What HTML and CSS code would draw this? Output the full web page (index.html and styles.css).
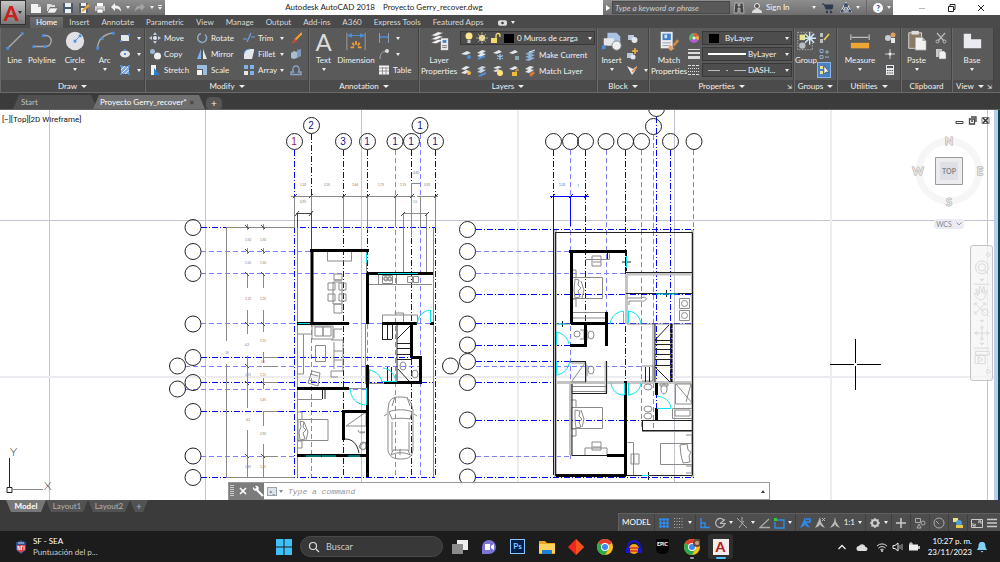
FILE: index.html
```html
<!DOCTYPE html>
<html lang="es">
<head>
    <meta charset="UTF-8">
    <meta name="viewport" content="width=device-width, initial-scale=1.0">
    <title>Autodesk AutoCAD 2018 - Proyecto Gerry_recover.dwg</title>
    <link rel="stylesheet" href="styles.css">
</head>
<body>

    <header class="header">
        <button class="app-button" aria-label="Application menu"><span class="app-letter">A</span><span class="caret"></span></button>

        <div class="titlebar">
            <div class="quick-access">
                <button aria-label="New"><svg class="ico" viewBox="0 0 12 12"><path d="M1 2h7l3 3v6H1z" fill="#f2f2f2"/><path d="M8 2v3h3z" fill="#999"/></svg></button>
                <button aria-label="Open"><svg class="ico" viewBox="0 0 12 12"><path d="M1 2h4l1 1h3v2H4l-2 4H1z" fill="#ddd"/><path d="M4 6h8l-3 5H1z" fill="#f2f2f2" stroke="#555" stroke-width=".5"/></svg></button>
                <button aria-label="Save"><svg class="ico" viewBox="0 0 12 12"><path d="M1 1h10v10H1z" fill="#44586e"/><path d="M3 1h6v4H3zM3 7h6v4H3z" fill="#eee"/></svg></button>
                <button aria-label="Save as"><svg class="ico" viewBox="0 0 12 12"><path d="M1 1h9v10H1z" fill="#53616e"/><path d="M3 1h5v3H3zM3 6h5v5H3z" fill="#eee"/><path d="M4 8l6-6 2 2-6 5-3 1z" fill="#e8a33a"/></svg></button>
                <button aria-label="Plot"><svg class="ico" viewBox="0 0 12 12"><path d="M3 1h6v3H3z" fill="#fff"/><path d="M1 4h10v5H1z" fill="#ccc"/><path d="M3 7h6v4H3z" fill="#fff" stroke="#666" stroke-width=".6"/></svg></button>
                <button class="with-caret" aria-label="Undo"><svg class="ico" viewBox="0 0 12 12"><path d="M1 5l4-4v2.500c4 0 6 2 6 6C9 7 8 6.500 5 6.500V9z" fill="#f2f2f2"/></svg><span class="caret"></span></button>
                <button class="with-caret" aria-label="Redo"><svg class="ico" viewBox="0 0 12 12"><path d="M11 5L7 1v2.500c-4 0-6 2-6 6C3 7 4 6.500 7 6.500V9z" fill="#a4a4a4"/></svg><span class="caret"></span></button>
                <button class="customize" aria-label="Customize"><span class="caret"></span></button>
            </div>
            <div class="app-title"><span>Autodesk AutoCAD 2018</span><span>Proyecto Gerry_recover.dwg</span></div>
            <div class="infocenter">
                <span class="info-arrow"></span>
                <input class="keyword" type="text" aria-label="Search help" placeholder="Type a keyword or phrase">
                <button aria-label="Search"><svg class="ico" viewBox="0 0 12 12"><path d="M2 1h3v3h2V1h3l1 10H7V6H5v5H1z" fill="#444" stroke="#ddd" stroke-width=".6"/></svg></button>
                <button class="sign-in"><svg class="ico" viewBox="0 0 12 12"><circle cx="6" cy="4" r="2.500" fill="#555" stroke="#eee"/><path d="M1 11c0-3 2-4 5-4s5 1 5 4z" fill="#ddd"/></svg>Sign In<span class="caret"></span></button>
                <button aria-label="App store"><svg class="ico" viewBox="0 0 12 12"><path d="M0 2h2l2 5h6l1-4H3" fill="#2f3a52" stroke="#2f3a52"/><circle cx="5" cy="10" r="1.200" fill="#2f3a52"/><circle cx="9" cy="10" r="1.200" fill="#2f3a52"/></svg></button>
                <button class="with-caret" aria-label="Connect"><svg class="ico" viewBox="0 0 12 12"><path d="M6 2L2 9h8z" fill="none" stroke="#f2f2f2" stroke-width="2.500"/><path d="M6 2L2 9h8z" fill="none" stroke="#3f4d6e"/><circle cx="6" cy="3" r="2" fill="#3f4d6e"/><circle cx="2" cy="9" r="1.500" fill="#3f4d6e"/><circle cx="10" cy="9" r="1.500" fill="#3f4d6e"/></svg><span class="caret"></span></button>
                <button class="with-caret help" aria-label="Help"><span class="help-mark">?</span><span class="caret"></span></button>
            </div>
            <div class="window-buttons">
                <button aria-label="Minimize"><svg class="ico" viewBox="0 0 12 12"><path d="M3 6.500h6" stroke="#bbb"/></svg></button>
                <button aria-label="Restore"><svg class="ico" viewBox="0 0 12 12"><path d="M3.500 4.500h5v5h-5zM5 4V2.500h5v5H9" fill="none" stroke="#222"/></svg></button>
                <button aria-label="Close"><svg class="ico" viewBox="0 0 12 12"><path d="M3 3l6 6M9 3L3 9" stroke="#222"/></svg></button>
            </div>
        </div>

        <nav class="ribbon-tabs">
            <a class="active" href="#">Home</a>
            <a href="#">Insert</a>
            <a href="#">Annotate</a>
            <a href="#">Parametric</a>
            <a href="#">View</a>
            <a href="#">Manage</a>
            <a href="#">Output</a>
            <a href="#">Add-ins</a>
            <a href="#">A360</a>
            <a href="#">Express Tools</a>
            <a href="#">Featured Apps</a>
            <button class="with-caret" aria-label="Ribbon display"><svg class="pill" viewBox="0 0 10 6"><rect width="10" height="6" rx="2" fill="#ddd"/><circle cx="5" cy="3" r="1.500" fill="#444"/></svg><span class="caret"></span></button>
        </nav>
    </header>

    <section class="ribbon">
        <div class="panel panel-draw">
            <div class="tools">
                <button class="big"><svg viewBox="0 0 24 24"><path d="M4 20L20 4" stroke="#aaa" stroke-width="1.500"/><path d="M2.500 18.500h3v3h-3zM18.500 2.500h3v3h-3z" fill="#4f8fd8"/></svg>Line</button>
                <button class="big"><svg viewBox="0 0 24 24"><path d="M3 18h13a6 6 0 0 0 0-12h-2" fill="none" stroke="#aaa" stroke-width="1.500"/><path d="M1.500 16.500h3v3h-3zM14 16.500h3v3h-3zM12 4.500h3v3h-3z" fill="#4f8fd8"/></svg>Polyline</button>
                <button class="big wide"><svg viewBox="0 0 24 24"><circle cx="12" cy="12" r="10" fill="#dfe1e6"/><path d="M12 12l5-5" stroke="#4f8fd8"/><path d="M10.500 10.500h3v3h-3zM16 5h3v3h-3z" fill="#4f8fd8"/></svg>Circle<span class="caret"></span></button>
                <button class="big narrow"><svg viewBox="0 0 24 24"><path d="M4 20C4 10 10 5 21 3" fill="none" stroke="#aaa" stroke-width="1.500"/><path d="M2.500 18.500h3v3h-3zM7.500 8h3v3h-3zM19.500 2h3v3h-3z" fill="#4f8fd8"/></svg>Arc<span class="caret"></span></button>
                <div class="stack">
                    <button class="small" aria-label="Rectangle"><svg class="ico" viewBox="0 0 12 12"><path d="M2 3h8v6H2z" fill="#e4e8ec"/><path d="M1 8h2v2H1zM9 2h2v2H9z" fill="#4f8fd8"/></svg><span class="caret"></span></button>
                    <button class="small" aria-label="Ellipse"><svg class="ico" viewBox="0 0 12 12"><ellipse cx="6" cy="6" rx="5" ry="3.500" fill="#e4e8ec"/><path d="M5 5h2v2H5zM5 1h2v2H5z" fill="#4f8fd8"/></svg><span class="caret"></span></button>
                    <button class="small" aria-label="Hatch"><svg class="ico" viewBox="0 0 12 12"><path d="M2 2h8v8H2z" fill="#7ba6dc"/><path d="M2 6l4-4M2 10l8-8M6 10l4-4" stroke="#dfe8f2"/><path d="M1 1h2v2H1zM9 1h2v2H9zM1 9h2v2H1zM9 9h2v2H9z" fill="#4f8fd8"/></svg><span class="caret"></span></button>
                </div>
            </div>
            <div class="panel-title">Draw<span class="caret"></span></div>
        </div>

        <div class="panel panel-modify">
            <div class="tools">
                <div class="stack col">
                    <button class="small"><svg class="ico" viewBox="0 0 12 12"><path d="M6 0l2 3H4zM6 12l2-3H4zM0 6l3-2v4zM12 6L9 4v4z" fill="#b9cbe0"/><circle cx="6" cy="6" r="2" fill="#e4e8ec"/></svg>Move</button>
                    <button class="small"><svg class="ico" viewBox="0 0 12 12"><circle cx="3.500" cy="3.500" r="2.500" fill="#9fb7d3"/><circle cx="8.500" cy="8" r="3.500" fill="#eef0f2"/></svg>Copy</button>
                    <button class="small"><svg class="ico" viewBox="0 0 12 12"><path d="M2 1h5v10H2z" fill="#eef0f2"/><path d="M5 4l6 7H5z" fill="#2e7fd0"/></svg>Stretch</button>
                </div>
                <div class="stack col">
                    <button class="small"><svg class="ico" viewBox="0 0 12 12"><path d="M9 2.500A4.500 4.500 0 1 1 5 1.600" fill="none" stroke="#8fa9c6" stroke-width="1.500"/></svg>Rotate</button>
                    <button class="small"><svg class="ico" viewBox="0 0 12 12"><path d="M5 1v10H1z" fill="#7fb2e5"/><path d="M7 1v10h4z" fill="#e4e8ec"/></svg>Mirror</button>
                    <button class="small"><svg class="ico" viewBox="0 0 12 12"><path d="M1 1h10v10H7V5H1z" fill="#9dbde0"/><path d="M1 6h5v5H1z" fill="#f2f2f2"/></svg>Scale</button>
                </div>
                <div class="stack col">
                    <button class="small"><svg class="ico" viewBox="0 0 12 12"><path d="M0 7h4M8 5h4M4 10l4-9" stroke="#6fa5e0" stroke-width="1.200"/></svg>Trim<span class="caret push"></span></button>
                    <button class="small"><svg class="ico" viewBox="0 0 12 12"><path d="M1 11V6c0-3 3-5 6-5h4v2L9 11z" fill="#e4e8ec"/><path d="M1 6c0-3 3-5 6-5" stroke="#4f8fd8" fill="none"/></svg>Fillet<span class="caret push"></span></button>
                    <button class="small"><svg class="ico" viewBox="0 0 12 12"><path d="M1 1h4v4H1zM7 1h4v4H7zM7 7h4v4H7z" fill="#7fb2e5"/><path d="M1 7h4v4H1z" fill="#e4e8ec"/></svg>Array<span class="caret push"></span></button>
                </div>
                <div class="stack">
                    <button class="small" aria-label="Erase"><svg class="ico" viewBox="0 0 12 12"><path d="M12 1L5 8" stroke="#f0a030" stroke-width="2.200"/><path d="M5 7l2 2-3 2-3 .5z" fill="#c84b2e"/></svg></button>
                    <button class="small" aria-label="Explode"><svg class="ico" viewBox="0 0 12 12"><path d="M1 5l3-2 3 1v6l-3 1-3-1z" fill="#a8bcd2"/><path d="M7 2l4-1v7l-4 2z" fill="#7f9ab8"/></svg></button>
                    <button class="small" aria-label="Offset"><svg class="ico" viewBox="0 0 12 12"><path d="M1 10.500h10V8H8.500C10 5 9 2 6 2S2 5 3.500 8H1z" fill="none" stroke="#8aa6c6" stroke-width="1.300"/></svg></button>
                </div>
            </div>
            <div class="panel-title">Modify<span class="caret"></span></div>
        </div>

        <div class="panel panel-annotation">
            <div class="tools">
                <button class="big"><span class="text-icon">A</span>Text<span class="caret"></span></button>
                <button class="big wide"><svg viewBox="0 0 24 24"><path d="M2 3v19M22 3v19" stroke="#8a8a8a" stroke-width="1.500"/><path d="M3 6h18M3 6l4-2v4zM21 6l-4-2v4z" stroke="#4f8fd8" fill="#4f8fd8"/><path d="M12 12v4M8 14l2 3M16 14l-2 3M6 19h4M14 19h4" stroke="#f0a030" stroke-width="2"/></svg>Dimension</button>
                <div class="stack">
                    <button class="small" aria-label="Linear"><svg class="ico" viewBox="0 0 12 12"><path d="M1.500 1v10M10.500 1v10" stroke="#8aa0b8"/><path d="M2 5h8" stroke="#4f8fd8" stroke-width="1.500"/></svg><span class="caret"></span></button>
                    <button class="small" aria-label="Leader"><svg class="ico" viewBox="0 0 12 12"><path d="M2 11C2 6 4 3 9 3" fill="none" stroke="#aaa"/><circle cx="9" cy="3" r="2" fill="#ddd"/></svg><span class="caret"></span></button>
                    <button class="small"><svg class="ico" viewBox="0 0 12 12"><path d="M1 1.500h10v9H1z" fill="#f2f2f2"/><path d="M1 4h10M1 7h10M4.500 3v8M8 3v8" stroke="#777" stroke-width=".7"/></svg>Table</button>
                </div>
            </div>
            <div class="panel-title">Annotation<span class="caret"></span></div>
        </div>

        <div class="panel panel-layers">
            <div class="tools">
                <button class="big wide"><svg viewBox="0 0 24 24"><path d="M3 6l8-4 6 1-8 4zM3 10l8-4 6 1-8 4zM3 14l8-4 6 1-8 4z" fill="#f2f2f2" stroke="#555" stroke-width=".6"/><path d="M14 9h8v13h-8z" fill="#e4e8ec"/><path d="M16 11h4v3h-4z" fill="#3f7fcc"/><path d="M15.500 17h5M15.500 19h5" stroke="#777"/></svg>Layer<br>Properties</button>
                <div class="layer-tools">
                    <div class="combo layer-combo">
                        <svg class="ico" viewBox="0 0 12 12"><circle cx="6" cy="4" r="3.500" fill="#ffe58a"/><path d="M4.500 8h3v3h-3z" fill="#ccc"/></svg>
                        <svg class="ico" viewBox="0 0 12 12"><circle cx="6" cy="6" r="3" fill="#fff0b0"/><path d="M6 0v12M0 6h12M2 2l8 8M10 2l-8 8" stroke="#d9c98a" stroke-width=".7"/></svg>
                        <svg class="ico" viewBox="0 0 12 12"><path d="M2 6h6v5H2z" fill="#f3dc6b"/><path d="M7 6V3.500a2 2 0 0 1 4 0V5" fill="none" stroke="#f3dc6b" stroke-width="1.300"/></svg>
                        <span class="swatch"></span>
                        <select aria-label="Layer"><option>0 Muros de carga</option></select>
                    </div>
                    <div class="icon-row">
                        <button aria-label="Layer off"><svg class="ico" viewBox="0 0 12 12"><path d="M1 5l6-3 4 2-5 2z" fill="#e4e8ec"/><circle cx="9" cy="8" r="2" fill="#4f8fd8"/></svg></button>
                        <button aria-label="Isolate"><svg class="ico" viewBox="0 0 12 12"><path d="M1 4l5-3 4 1-5 3zM1 7l5-3 4 1-5 3z" fill="#e4e8ec"/><path d="M2 10l7-3" stroke="#4f8fd8" stroke-width="2"/></svg></button>
                        <button aria-label="Freeze"><svg class="ico" viewBox="0 0 12 12"><path d="M1 4l6-3 3 2-5 2z" fill="#e4e8ec"/><path d="M8 5v6M5 6.500l6 3M11 6.500l-6 3" stroke="#9cc7f0" stroke-width="1.300"/></svg></button>
                        <button aria-label="Lock"><svg class="ico" viewBox="0 0 12 12"><path d="M1 4l6-3 3 2-5 2z" fill="#e4e8ec"/><path d="M7 7h4v4H7z" fill="#8aa"/></svg></button>
                        <button class="named"><svg class="ico" viewBox="0 0 12 12"><path d="M1 5l6-3 4 1-6 3zM1 8l6-3 4 1-6 3zM1 11l6-3 4 1-6 3z" fill="#8fb0d8"/><path d="M5 3l6-2" stroke="#dfe8f2"/></svg>Make Current</button>
                    </div>
                    <div class="icon-row">
                        <button aria-label="All on"><svg class="ico" viewBox="0 0 12 12"><path d="M1 4l5-3 4 1-5 3zM1 8l5-3 4 1-5 3z" fill="#e4e8ec"/><circle cx="9" cy="8" r="2" fill="#f5b942"/></svg></button>
                        <button aria-label="Unisolate"><svg class="ico" viewBox="0 0 12 12"><path d="M1 4l5-3 4 1-5 3zM1 7l5-3 4 1-5 3z" fill="#c8d4e0"/><path d="M3 11l7-3" stroke="#4f8fd8" stroke-width="2"/></svg></button>
                        <button aria-label="Thaw"><svg class="ico" viewBox="0 0 12 12"><path d="M1 3l5-2 4 1-5 2zM1 6l5-2 2 1-4 2z" fill="#e4e8ec"/><circle cx="8" cy="8" r="3" fill="#ffe27a"/></svg></button>
                        <button aria-label="Unlock"><svg class="ico" viewBox="0 0 12 12"><path d="M1 4l6-3 3 2-5 2z" fill="#e4e8ec"/><path d="M4 7h5v4H4z" fill="#f3b93b"/><path d="M8 7V5h3" stroke="#f3b93b" fill="none"/></svg></button>
                        <button class="named"><svg class="ico" viewBox="0 0 12 12"><path d="M1 4l5-3 4 1-5 3zM1 7l5-3 4 1-5 3z" fill="#e4e8ec"/><path d="M5 9l4-3 2 2-4 4z" fill="#d07a3a"/></svg>Match Layer</button>
                    </div>
                </div>
            </div>
            <div class="panel-title">Layers<span class="caret"></span></div>
        </div>

        <div class="panel panel-block">
            <div class="tools">
                <button class="big"><svg viewBox="0 0 24 24"><path d="M7 3h10l4 4v10H7z" fill="#a9c3e4"/><path d="M3 9h11v8H3z" fill="#e4e8ec"/><circle cx="17" cy="17" r="5" fill="#eef0f2" stroke="#888"/><path d="M1 17h4v4H1z" fill="#4f8fd8"/></svg>Insert<span class="caret"></span></button>
                <div class="stack flush">
                    <button class="small" aria-label="Create block"><svg class="ico" viewBox="0 0 12 12"><path d="M2 3h6v5H2z" fill="#b8c8da"/><circle cx="8.500" cy="8" r="3" fill="#e4e8ec"/></svg></button>
                    <button class="small" aria-label="Edit block"><svg class="ico" viewBox="0 0 12 12"><path d="M1 5h6v5H1z" fill="#b8c8da"/><circle cx="7" cy="9" r="2.500" fill="#e4e8ec"/><path d="M9 0v6M6 3h6" stroke="#f5b942" stroke-width="1.500"/></svg></button>
                    <button class="small" aria-label="Attributes"><svg class="ico" viewBox="0 0 12 12"><path d="M1 2l5 9 3-4 2-5-4 3z" fill="#e4e8ec"/><path d="M6 8l5-5" stroke="#e08a40" stroke-width="1.500"/></svg><span class="caret"></span></button>
                </div>
            </div>
            <div class="panel-title">Block<span class="caret"></span></div>
        </div>

        <div class="panel panel-properties">
            <div class="tools">
                <button class="big wide"><svg viewBox="0 0 24 24"><path d="M3 2h13v18H3z" fill="#e9edf1"/><path d="M5 4h9v7H5z" fill="#3f7fcc"/><path d="M7 5h3v4H7z" fill="#cfe2f7"/><path d="M5 14h9M5 17h7" stroke="#999"/><path d="M22 11l-5 6" stroke="#c98b4a" stroke-width="3"/><path d="M13 16l5 4-4 3-3-3z" fill="#e0a566"/></svg>Match<br>Properties</button>
                <div class="property-list">
                    <label for="color"><svg class="ico" viewBox="0 0 12 12"><path d="M6 6V1a5 5 0 0 1 4.300 7.500z" fill="#e8b23a"/><path d="M6 6l4.300 2.500a5 5 0 0 1-8.600 0z" fill="#b25ad0"/><path d="M6 6L1.700 8.500A5 5 0 0 1 6 1z" fill="#5ab46a"/><path d="M6 6V1a5 5 0 0 1 4.300 2.500z" fill="#e2574c"/><circle cx="6" cy="6" r="1.500" fill="#eee"/></svg></label>
                    <div class="combo"><span class="swatch"></span><select id="color"><option>ByLayer</option></select></div>
                    <label for="weight"><svg class="ico" viewBox="0 0 12 12"><path d="M0 1.500h12" stroke="#ddd"/><path d="M0 5h12" stroke="#ddd" stroke-width="2"/><path d="M0 9.500h12" stroke="#ddd" stroke-width="3"/></svg></label>
                    <div class="combo"><span class="line-sample solid"></span><select id="weight"><option>ByLayer</option></select></div>
                    <label for="linetype"><svg class="ico" viewBox="0 0 12 12"><path d="M0 1.500h12M0 10.500h12" stroke="#ddd" stroke-dasharray="3 1"/><path d="M0 4.500h12M0 7.500h12" stroke="#ddd" stroke-dasharray="1 1"/></svg></label>
                    <div class="combo"><span class="line-sample dashed"></span><select id="linetype"><option>DASH...</option></select></div>
                </div>
            </div>
            <div class="panel-title">Properties<span class="caret"></span><span class="launcher">⇲</span></div>
        </div>

        <div class="panel panel-groups">
            <div class="tools">
                <button class="big narrow"><svg viewBox="0 0 24 24"><path d="M3 2.500h16v19H3z" fill="none" stroke="#bbb" stroke-dasharray="1.500 1.500"/><path d="M5 5h6v6H5z" fill="#e8e48a"/><circle cx="8" cy="17" r="3.500" fill="#b9bec4"/><path d="M16 2v14M9 9h14M11 4l10 10M21 4L11 14" stroke="#cfe6fb" stroke-width="1.500"/></svg>Group</button>
                <div class="stack flush">
                    <button class="small" aria-label="Ungroup"><svg class="ico" viewBox="0 0 12 12"><path d="M2 1h3v4H2zM2 7h3v4H2z" fill="#b9bec4"/><path d="M6 8l5-6" stroke="#e8d44a" stroke-width="1.500"/></svg></button>
                    <button class="small" aria-label="Group edit"><svg class="ico" viewBox="0 0 12 12"><path d="M2 1.500h3v3H2zM2 7.500h3v3H2z" fill="none" stroke="#8fa9c6"/><path d="M7 4h4M9 2v4M7 9h4" stroke="#9db2c8"/></svg></button>
                    <button class="small pressed" aria-label="Group selection"><svg class="ico" viewBox="0 0 12 12"><path d="M2 2h3v3H2zM2 7h3v3H2z" fill="#e8e48a"/><path d="M6 2l5 6H8l-2 2z" fill="#fff" stroke="#333" stroke-width=".5"/></svg></button>
                </div>
            </div>
            <div class="panel-title">Groups<span class="caret"></span></div>
        </div>

        <div class="panel panel-utilities">
            <div class="tools">
                <button class="big wide"><svg viewBox="0 0 24 24"><path d="M2 5v6M22 5v6M3 8h18" stroke="#bcbcbc" stroke-width="1.300"/><path d="M2 14h20v6H2z" fill="#eba634"/></svg>Measure<span class="caret"></span></button>
                <div class="stack">
                    <button class="small" aria-label="Quick select"><svg class="ico" viewBox="0 0 12 12"><circle cx="4" cy="6" r="3" fill="#c8ccd0"/><circle cx="9" cy="3" r="2.500" fill="#e0a060"/><path d="M7 6h4v5H7z" fill="#e4e8ec"/></svg></button>
                    <button class="small" aria-label="Point"><svg class="ico" viewBox="0 0 12 12"><path d="M6 1v10M1 6h10" stroke="#ccc"/><circle cx="6" cy="6" r="1.500" fill="#eee"/></svg></button>
                    <button class="small" aria-label="Calculator"><svg class="ico" viewBox="0 0 12 12"><path d="M2 1h8v10H2z" fill="#e4e8ec"/><path d="M3 2h6v2H3z" fill="#555"/><path d="M3 6.500h6M3 9h6" stroke="#555" stroke-dasharray="1.500 .8"/></svg></button>
                </div>
            </div>
            <div class="panel-title">Utilities<span class="caret"></span></div>
        </div>

        <div class="panel panel-clipboard">
            <div class="tools">
                <button class="big"><svg viewBox="0 0 24 24"><path d="M3 3h14v17H3z" fill="#8a7a66" stroke="#ddd"/><path d="M6 1h8v4H6z" fill="#ddd"/><path d="M10 8h8l4 4v10H10z" fill="#f2f2f2" stroke="#777" stroke-width=".6"/><path d="M18 8v4h4z" fill="#aaa"/></svg>Paste<span class="caret"></span></button>
                <div class="stack">
                    <button class="small" aria-label="Cut"><svg class="ico" viewBox="0 0 12 12"><path d="M2 1l7 8M10 1L3 9" stroke="#bbb" stroke-width="1.200"/><circle cx="2.500" cy="9.500" r="1.500" fill="none" stroke="#bbb"/><circle cx="9.500" cy="9.500" r="1.500" fill="none" stroke="#bbb"/></svg></button>
                    <button class="small" aria-label="Copy clip"><svg class="ico" viewBox="0 0 12 12"><path d="M1 1h6v8H1z" fill="#ccc"/><path d="M4 3h5l2 2v6H4z" fill="#f2f2f2" stroke="#777" stroke-width=".5"/></svg></button>
                </div>
            </div>
            <div class="panel-title">Clipboard</div>
        </div>

        <div class="panel panel-view">
            <div class="tools">
                <button class="big wide"><svg viewBox="0 0 24 24"><path d="M3 4h8v6h11v10H3z" fill="#e9ebee"/></svg>Base<span class="caret"></span></button>
            </div>
            <div class="panel-title">View<span class="caret"></span><span class="launcher">⇲</span></div>
        </div>
    </section>

    <nav class="file-tabs">
        <a class="file-tab start" href="#">Start</a>
        <a class="file-tab current" href="#">Proyecto Gerry_recover*<span class="close">✕</span></a>
        <button class="add-tab" aria-label="New tab">+</button>
    </nav>

    <main class="viewport">
        <svg class="drawing" viewBox="0 110 994 390" preserveAspectRatio="xMinYMin meet">
            <!-- background grid -->
            <path class="grid" d="M49.500 110v390M205.500 110v390M361.500 110v390M674.500 110v390M987.500 110v390M0 220.500h994"/>
            <path class="grid-faint" d="M518 110v390M831 110v390M0 377h994"/>

            <!-- axes, ground floor -->
            <path class="axis-light" d="M311.500 250v227M367.500 300v177M395.500 150v327M420.500 134v343M201 251.500h110M201 273.500h167M201 323.500h233M185 366.500h235M185 389.500h182M201 456.500h160"/>
            <path class="axis" d="M294.500 150v327M311.500 134v116M343.500 150v327M367.500 150v150M411.500 150v327M435.500 150v327M201 227.500h234M201 357.500h220M201 382.500h232M201 411.500h150M201 477.500h234"/>
            <!-- axes, upper floor -->
            <path class="axis-light" d="M570.500 150v310M606.500 150v170M641.500 150v280M653.500 135v296M693.500 150v327M476 251.500h94M476 273.500h218M476 366.500h166M476 456.500h94"/>
            <path class="axis" d="M553.500 150v327M585.500 150v190M625.500 150v327M656.500 117v300M670.500 150v234M476 229.500h218M476 294.500h218M476 323.500h218M476 345.500h95M476 361.500h110M476 382.500h218M476 420.500h218M476 477.500h218"/>

            <g class="bubbles">
                <circle cx="294.500" cy="141.500" r="8"/><circle cx="311.500" cy="125.500" r="8"/><circle cx="343.500" cy="141.500" r="8"/><circle cx="367.500" cy="141.500" r="8"/><circle cx="395" cy="141.500" r="8"/><circle cx="411.500" cy="141.500" r="8"/><circle cx="420" cy="125.500" r="8"/><circle cx="435.500" cy="141.500" r="8"/>
                <circle cx="193" cy="227.500" r="8"/><circle cx="193" cy="251.500" r="8"/><circle cx="193" cy="273.500" r="8"/><circle cx="193" cy="324" r="8"/><circle cx="193" cy="357.500" r="8"/><circle cx="177.500" cy="366" r="8"/><circle cx="193" cy="382.500" r="8"/><circle cx="177.500" cy="389" r="8"/><circle cx="193" cy="411.500" r="8"/><circle cx="193" cy="456" r="8"/><circle cx="193" cy="477.500" r="8"/>
                <circle cx="553.500" cy="141.500" r="8"/><circle cx="570.500" cy="141.500" r="8"/><circle cx="585.500" cy="141.500" r="8"/><circle cx="606" cy="141.500" r="8"/><circle cx="625.500" cy="141.500" r="8"/><circle cx="641.500" cy="141.500" r="8"/><circle cx="670.500" cy="141.500" r="8"/><circle cx="694" cy="141.500" r="8"/><circle cx="653.500" cy="126.500" r="8"/><circle cx="656.500" cy="108.500" r="8"/>
                <circle cx="467.500" cy="229.500" r="8"/><circle cx="467.500" cy="251.500" r="8"/><circle cx="467.500" cy="273.500" r="8"/><circle cx="467.500" cy="294.500" r="8"/><circle cx="467.500" cy="324" r="8"/><circle cx="467.500" cy="345" r="8"/><circle cx="467.500" cy="361.500" r="8"/><circle cx="450.500" cy="366" r="8"/><circle cx="467.500" cy="382.500" r="8"/><circle cx="467.500" cy="420" r="8"/><circle cx="467.500" cy="456" r="8"/><circle cx="467.500" cy="477" r="8"/>
            </g>
            <g class="bubble-text">
                <text class="red" x="294" y="145">1</text><text x="311" y="129">2</text><text x="343" y="145">3</text><text x="367" y="145">1</text><text x="395" y="145">1</text><text x="411" y="145">1</text><text x="420" y="129">1</text><text x="435" y="145">1</text>
            </g>

            <!-- dimensions -->
            <path class="dim" d="M291 196.500h124M417 196.500h21M294.500 196v32M311.500 196v16M343.500 196v34M367.500 196v34M395.500 196v31M411.500 183v54M420.500 196v32M435.500 196v32M411 183.500h9M403 213.500h24M403.500 213v59M426.500 213v59M226.500 227.500h68M226.500 227v114M226.500 364v113M247.500 224v6M247.500 248v6M247.500 273v15M247.500 310v24M247.500 356v52M247.500 430v47M263.500 224v6M263.500 248v6M263.500 273v15M263.500 310v22M263.500 352v11M263.500 378v11M263.500 411v15M263.500 444v33M263 357.500h15M263 366.500h15M263 382.500h15M263 411.500h15M263 456.500h15M226 477.500h68"/>
            <path class="dim dark" d="M296 213.500h16M297.500 214v14M311.500 213v37M293 198l4-4M309 198l4-4M342 198l4-4M366 198l4-4M394 198l4-4M410 198l4-4M434 198l4-4M295 216l4-5M309 216l4-5M401 216l4-4M425 216l4-4M245 225l4 4M261 225l4 4M245 249l4 4M261 249l4 4M245 272l4 4M261 272l4 4M245 322l4 4M261 322l4 4M245 364l4 4M245 381l4 4M261 381l4 4M245 454l4 4M261 454l4 4"/>
            <path class="dim blue" d="M550 196.500h39M553.500 194v280M570.500 196v30M551 198l4-4M569 198l4-4M584 198l4-4"/>
            <g class="dim-text">
                <text x="303" y="186">1,20</text><text x="327" y="186">2,35</text><text x="355" y="186">1,64</text><text x="381" y="186">1,75</text><text x="403" y="186">1,15</text><text x="427" y="186">0,90</text><text x="416" y="174">0,60</text><text x="303" y="203">0,95</text><text x="415" y="203">1,5</text>
                <text x="248" y="241">1,50</text><text x="263" y="241">1,50</text><text x="248" y="264">1,50</text><text x="263" y="264">1,50</text><text class="red" x="248" y="300">3,30</text><text class="red" x="263" y="300">3,20</text><text x="247" y="346">4,2</text><text class="red" x="263" y="342">2,15</text><text x="227" y="354">16</text><text x="248" y="376">1,15</text><text class="red" x="263" y="363">0,6</text><text class="red" x="263" y="376">1,15</text><text class="red" x="263" y="401">1,45</text><text x="248" y="421">4,2</text><text x="263" y="435">2,90</text><text x="248" y="468">1,45</text><text class="red" x="263" y="468">1,45</text>
                <text class="blue" x="562" y="186">1,20</text><text class="blue" x="578" y="187">1</text>
            </g>

            <!-- ground floor -->
            <path class="thin" d="M297.500 228v249M433.500 228v249M366.500 252v21M327.500 252v9h24v-9M349 388.500h18M368 284.500h64M378.500 275v9M396.500 275v9M368.500 383.500h16M365.500 324v60M382.500 324v-9h35v9M394.500 313h9v11M297.500 334h6v40h-6M304 334h8M312 326h21v13h-21zM315 327h8v9h-8zM323 327h8v9h-8zM334 338v-9h8M315.500 345.500h10v16h-10zM331 340h12v31h-12M334 342v27M334 351h8M334 360h8M331 371v6h7M312 371l8 2-2 13-10-3zM310 374l8 2M309 380l7 2M298 399.500h24"/>
            <path class="thin" d="M298 419.500h30v21h-30zM298 412h4v7M298 441h4v7h-4M300 421l4 1-1 5 3 3-3 3 2 6-5 1-1-8 2-5zM304 422l4 10-2 8M344.500 412h22M346 426h20v-13M346 426l20-14M358 430a4 3 0 0 0 7 2h-5M359 446a4 4 0 1 0 6-4z"/>
            <path class="thin" d="M334 274h8v6h-8zM328 283h7v7h-7zM339 283h7v7h-7zM328 294h7v7h-7zM339 294h7v7h-7zM334 304h8v9h-8zM334 280h8M333 282h9v22h-9zM382.500 275.500h10v8h-10zM384 277h3v3h-3zM388 277h3v3h-3zM407.500 276.500h5v6h-5zM413.500 276.500h5v6h-5z"/>
            <g class="thin">
                <path d="M389 403c2-5 5-6 11-6s9 1 11 6l2 7v40c-1 6-3 9-12 9s-12-3-13-9v-40zM389 412c5-3 18-3 23 0l-2 7c-5-1-13-1-18 0zM392 422v29M409 422v29M391 455c5-3 14-3 19 0l-2-5h-15zM395 397l-3 9M407 397l3 9M387 414l-3 2M414 414l3 2M400 449v6"/>
                <ellipse cx="363" cy="446" rx="3" ry="4"/><ellipse cx="403" cy="366" rx="3" ry="4"/><ellipse cx="415" cy="374" rx="3" ry="4"/><circle cx="386" cy="279" r="2"/><circle cx="390" cy="279" r="2"/>
            </g>
            <path class="medium" d="M382.500 325v14M387.500 325v14M392.500 325v14M382 339.500h10M397 325v57M397 343.500h14M397 348.500h14M397 354.500h14M397 359.500h14M397 339l13-13M398 369l11 12M387.500 367v15M391.500 367v15M322.500 389v10M325 389v10M345 439c7 0 12 4 14 14"/>
            <path class="wall" d="M310 250.500h59M312 249v75M367.500 273v51M367 273.500h66M297 323.500h52M382 323.500h35M430 323.500h4M411.500 324v33M411 357.500h11M420.500 357v27M384 382.500h37M367.500 365v112M297 388.500h52M342 411.500h26M343.500 411v29M297 455.500h71"/>
            <path class="cyan" d="M366.500 253v10M378 273.500h40M298 323.500h12M306 456h15M322 456h14M348 456h12M417 324c1-8 6-13 13-14M430.500 310v13M369.500 369v14M369 370c7 1 12 6 13 12M382 381.500h15M396 382c-1-8-6-13-13-14M366.500 388v17M350 389c1 9 6 15 15 16"/>

            <!-- upper floor -->
            <path class="band" d="M555.500 230v247M692.500 230v247M627 274h65M626.500 274v50M653.500 324v60M556 382.500h136M570.500 383v72M606 361v32"/>
            <path class="thin" d="M585.500 259.500h24v-6M592 256h9v10h-9zM593 262h8M571.500 277.500h31v21h-31zM572 270h4v7M572 299h4v8M575 279l4 1-1 5 3 3-3 3 2 6-5 1-1-8zM581 281l3 9-2 8M571 312.500h36v10h-36M571 318h35M556 324h14M627 324h65M572 384v9M571 386.500h35M571 391.500h35M571.500 407.500h31v21h-31zM571 400h5v7M571 429h5v7h-5M575 410l5 1-1 5 3 3-3 3 2 5-5 1-1-8zM581 410l3 9-2 8M585 455v-7h22v7M592 442h9v8h-9zM593 447h8M627 298h14c7-3 7 4 0 3h-12v4M679.500 298.500h10v10h-10zM679.500 310.500h10v10h-10zM672 324v58M660.500 443.500h32v21h-32zM686 435h6v8M686 466h6v7h-6M680 445l7-1 1 6 3 2-2 4 1 6-7 1-2-8zM627.500 442.500h6v33M631 454h8v10h-8zM634 454v10M675.500 384h16v20h-16zM676 384l16 19M691 384l-5 18M672.500 408.500h20v10h-20zM675 410h15v6h-15zM642 431.500h50M571 363h15v19h-15M572 381l13-18M642 366h11v15h-11M660 384h8v2h-8z"/>
            <g class="thin">
                <ellipse cx="577" cy="334" rx="3" ry="3"/><ellipse cx="591" cy="335" rx="3" ry="4"/><ellipse cx="591" cy="370" rx="3" ry="4"/><ellipse cx="664" cy="389" rx="3" ry="5"/><circle cx="684.500" cy="303.500" r="3"/><circle cx="684.500" cy="315.500" r="3"/><ellipse cx="648" cy="387" rx="4" ry="3"/><ellipse cx="648" cy="409" rx="4" ry="3"/><ellipse cx="648" cy="416" rx="4" ry="3"/>
                <path d="M580 330h4v9h-4M587 330v10M587 365v11"/>
            </g>
            <path class="medium" d="M555.500 232.500h137v243M555.500 232v244M625 272.500h67M626 293.500h66M607.500 253v6M572 384v72M572 393.500h35M606.500 361v33M570 361.500h16M585.500 362v20M671 324v58M655 324v58M655 340.500h15M655 344.500h15M655 349.500h15M655 354.500h15M655 359.500h15M655 365.500h15M655 340l14-15M655 367l15 15M645.500 367v15M649.500 367v15M642 420.500h50M642.500 421v10M642 430.500h50M626 475.500h66M622 262h9M562.500 321v6M666.500 290v7M648.500 472v8M572 455.500h36"/>
            <path class="wall" d="M569 251.500h58M571.500 250v74M571 323.500h36M606.500 312v34M585.500 324v21M570 345.500h17M625.500 381v95M607 455.500h19M556 475.500h70M656.500 383v12M656.500 408v12"/>
            <path class="wall-edge" d="M626 252v20M671.500 324v58"/>
            <path class="cyan" d="M626.500 256v12M558 324h8M656 294h22M610 324c1-7 6-12 13-13M623.500 311v12M628.500 323v-12M628 311c8 1 12 6 13 13M556.500 332v13M556 332c7 1 12 6 13 12M556.500 361v13M556 375c8-1 12-6 14-14M611 383c1 8 6 12 13 12M624.500 395v-12M628.500 383v12M628 395c8-1 12-5 13-12M657 396c8 1 13 5 14 12M657 408.500h14M642 475.500h7"/>

            <!-- UCS icon and cursor -->
            <path class="ucs" d="M9.500 458v29M7 487.500h5v5H7z"/>
            <path class="dim" d="M12 489.500h31"/>
            <text class="ucs-text" x="10" y="456">Y</text>
            <text class="ucs-text" x="44" y="490">X</text>
            <path class="cursor" d="M830 364.500h24M857 364.500h24M855.500 339v24M855.500 366v24"/>
        </svg>

        <div class="view-label">[−][Top][2D Wireframe]</div>

        <div class="doc-buttons">
            <button aria-label="Minimize drawing"><svg viewBox="0 0 9 9"><path d="M1 5.500h7v2H1z" fill="#fff" stroke="#444"/></svg></button>
            <button aria-label="Restore drawing"><svg viewBox="0 0 9 9"><path d="M3 1h5v5M1.500 3h5v5h-5zM3 5h2" fill="none" stroke="#444" stroke-width="1.300"/></svg></button>
            <button aria-label="Close drawing"><svg viewBox="0 0 9 9"><path d="M1 1.500h7v6H1z" fill="none" stroke="#777"/><path d="M2 2l5 5M7 2L2 7" stroke="#333" stroke-width="1.500"/></svg></button>
        </div>

        <div class="viewcube">
            <svg viewBox="0 0 76 76">
                <circle cx="38" cy="38" r="30" fill="none" stroke="#f6f6f6" stroke-width="7"/>
                <path d="M24.500 24.500h27v27h-27z" fill="#ececee" stroke="#9a9a9a"/>
                <path d="M29 29h18v18H29z" fill="#dfe0e6"/>
                <text class="cube-face" x="38" y="41">TOP</text>
                <text class="compass" x="38" y="12">N</text><text class="compass" x="38" y="73">S</text><text class="compass" x="7" y="42">W</text><text class="compass" x="69" y="42">E</text>
            </svg>
            <button class="wcs">WCS<svg viewBox="0 0 6 4"><path d="M.5.500L3 3l2.500-2.500" fill="none" stroke="#999"/></svg></button>
        </div>

        <div class="navbar">
            <svg viewBox="0 0 23 136">
                <g fill="none" stroke="#d6d6d6">
                    <circle cx="12" cy="18" r="7"/><circle cx="12" cy="18" r="4"/><path d="M15 22l4 3M3 36.500h17M3 106.500h17"/>
                    <path d="M8 53c-3-3-5-6-4-7l4 3-3-7c1-1 2 0 4 5V39c1-1 2 0 3 7l2-7c1 0 1 1 0 8l3-4c2 0-1 4-2 8-1 3-6 3-7 2z"/>
                    <path d="M5 58l10 10M15 58L5 68M4 60v-3h3M13 57h3v3M4 66v3h3"/><circle cx="15" cy="67" r="3.500"/><path d="M17 69l3 3"/>
                    <path d="M12 83v14M5 90h14M10 85l2-3 2 3M10 95l2 3 2-3M7 88l-3 2 3 2M17 88l3 2-3 2"/>
                    <path d="M4.500 114.500h11v9h-11zM5 110h15v4H5zM8 116l5 3-5 3z"/>
                    <path d="M10 31h4l-2 2zM10 76h4l-2 2zM10 101h4l-2 2z"/>
                    <circle cx="19" cy="4" r="2"/><circle cx="19" cy="132" r="2"/>
                </g>
            </svg>
        </div>

        <div class="command-line">
            <div class="command-grip">
                <span class="dots"></span>
                <button aria-label="Close command line"><svg class="ico" viewBox="0 0 12 12"><path d="M3 3l6 6M9 3L3 9" stroke="#fff" stroke-width="1.600"/></svg></button>
                <button aria-label="Customize command line"><svg class="ico" viewBox="0 0 12 12"><path d="M5 5l6 6" stroke="#fff" stroke-width="2.200"/><path d="M1 2l2 2 1.500-1.500L3 1c3-1 5 2 3 4S0 5 1 2z" fill="#fff"/></svg></button>
            </div>
            <span class="prompt">&gt;_</span><span class="caret"></span>
            <input type="text" aria-label="Command" placeholder="Type a command">
            <span class="caret up"></span>
        </div>
    </main>

    <div class="bottom-bar">
        <nav class="layout-tabs">
            <a class="current" href="#">Model</a>
            <a href="#">Layout1</a>
            <a href="#">Layout2</a>
            <button aria-label="New layout">+</button>
        </nav>
        <div class="status">
            <button class="model">MODEL</button>
            <button class="cut" aria-label="Grid"><svg class="ico" viewBox="0 0 12 12"><path d="M2.500 1v10M6 1v10M9.500 1v10M1 2.500h10M1 6h10M1 9.500h10" stroke="#2e8cf0" stroke-width="1.400"/></svg></button>
            <button aria-label="Snap"><svg class="ico" viewBox="0 0 12 12"><path d="M1 1.500h10M1 4.500h10M1 7.500h10M1 10.500h10" stroke="#aaa" stroke-dasharray="1 1.500"/></svg></button>
            <span class="caret"></span>
            <button class="cut" aria-label="Ortho"><svg class="ico" viewBox="0 0 12 12"><path d="M2 1v9.500h9M2 6h4v4" fill="none" stroke="#2e8cf0" stroke-width="1.400"/></svg></button>
            <button aria-label="Polar"><svg class="ico" viewBox="0 0 12 12"><path d="M9.500 3A4.500 4.500 0 1 0 10.500 7M6 6.500h6M6 6.500l5-4" fill="none" stroke="#bbb" stroke-width="1.200"/></svg></button>
            <span class="caret"></span>
            <button aria-label="Isodraft"><svg class="ico" viewBox="0 0 12 12"><path d="M1 1l10 10M6 0v5M8 4l-5 7" stroke="#aaa"/></svg></button>
            <span class="caret"></span>
            <button aria-label="Tracking"><svg class="ico" viewBox="0 0 12 12"><path d="M11 2l-9 8.500h10" fill="none" stroke="#aaa" stroke-width="1.300"/></svg></button>
            <button aria-label="Object snap"><svg class="ico" viewBox="0 0 12 12"><path d="M3 3h8v8H2V5" fill="none" stroke="#2e8cf0" stroke-width="1.400"/><path d="M1 1h3v3H1z" fill="#38c738"/></svg></button>
            <span class="caret"></span>
            <button class="cut" aria-label="Annotation visibility"><svg class="ico" viewBox="0 0 12 12"><path d="M6 0l1 5 4 6-4-2-1-2-1 2-4 2 3-6z" fill="#2e8cf0"/><path d="M7 2h4v3H7" fill="none" stroke="#2e8cf0" stroke-width="1.500"/></svg></button>
            <button aria-label="Auto scale"><svg class="ico" viewBox="0 0 12 12"><path d="M6 0l1 5 4 6-4-2-1-2-1 2-4 2 3-6z" fill="#bbb"/><path d="M8 1l3 3M11 1L8 4" stroke="#bbb"/></svg></button>
            <button aria-label="Annotation scale"><svg class="ico" viewBox="0 0 12 12"><path d="M6 0l1 5 4 6-4-2-1-2-1 2-4 2 4-6z" fill="#bbb"/></svg></button>
            <button class="scale">1:1<span class="caret"></span></button>
            <button class="cut" aria-label="Workspace"><svg class="ico" viewBox="0 0 12 12"><circle cx="6" cy="6" r="3" fill="none" stroke="#ccc" stroke-width="2"/><path d="M6 1v2M6 9v2M1 6h2M9 6h2M2.500 2.500L4 4M8 8l1.500 1.500M9.500 2.500L8 4M4 8L2.500 9.500" stroke="#ccc" stroke-width="1.500"/></svg></button>
            <span class="caret"></span>
            <button class="cut" aria-label="Monitor"><svg class="ico" viewBox="0 0 12 12"><path d="M6 1v10M1 6h10" stroke="#ccc" stroke-width="1.500"/></svg></button>
            <button class="cut" aria-label="Isolate objects"><svg class="ico" viewBox="0 0 12 12"><path d="M1.500 1.500h5v4h-5zM3 11l2-4 2 4z" fill="none" stroke="#aaa"/><circle cx="9" cy="6" r="2" fill="none" stroke="#aaa"/></svg></button>
            <button class="cut" aria-label="Performance"><svg class="ico" viewBox="0 0 12 12"><circle cx="6" cy="6" r="5" fill="none" stroke="#aaa"/><path d="M6 7L3 4" stroke="#aaa"/></svg></button>
            <button class="cut" aria-label="Update"><svg class="ico" viewBox="0 0 12 12"><path d="M1 1h5v4H1z" fill="#e8e48a"/><circle cx="7" cy="6" r="3" fill="#4a9bd8"/><path d="M4 8h7v3H4z" fill="#e8c84a"/></svg></button>
            <button class="cut" aria-label="Clean screen"><svg class="ico" viewBox="0 0 12 12"><path d="M.5 2.500h11v8H.5z" fill="none" stroke="#ccc"/><path d="M7 6l3-2M7 4h3v3M2 9l3-2M2 6v3h3" stroke="#ccc" fill="none"/></svg></button>
            <button class="menu" aria-label="Customization"><svg class="ico" viewBox="0 0 12 12"><path d="M1 2.500h10M1 6h10M1 9.500h10" stroke="#ccc" stroke-width="1.500"/></svg></button>
        </div>
    </div>

    <footer class="taskbar">
        <a class="widget" href="#">
            <svg viewBox="0 0 12 14"><path d="M1 2c2 0 4-1 5-2 1 1 3 2 5 2v7c0 2-3 3-5 5-2-2-5-3-5-5z" fill="#2b4f92"/><path d="M2 5h8v5c-1 1-3 2-4 3-1-1-3-2-4-3z" fill="#e0444a"/><path d="M3 10V6l2 4V6M6.500 10V6H8M9 6v4" stroke="#fff" stroke-width=".8" fill="none"/><path d="M3 3h6" stroke="#cdd8ec"/></svg>
            <span><b>SF - SEA</b><br>Puntuación del p...</span>
        </a>
        <div class="task-icons">
            <button aria-label="Start"><svg viewBox="0 0 16 16"><path d="M0 0h7.500v7.500H0zM8.500 0H16v7.500H8.500zM0 8.500h7.500V16H0zM8.500 8.500H16V16H8.500z" fill="#3fc1f7"/></svg></button>
            <label class="search"><svg class="ico" viewBox="0 0 12 12"><circle cx="5" cy="5" r="3.500" fill="none" stroke="#ddd" stroke-width="1.200"/><path d="M8 8l3 3" stroke="#ddd" stroke-width="1.200"/></svg><input type="text" placeholder="Buscar" aria-label="Buscar"></label>
            <button aria-label="Task view"><svg viewBox="0 0 16 16"><path d="M5 1h11v10H5z" fill="#eee"/><path d="M0 5h11v10H0z" fill="#8b8b8b"/></svg></button>
            <button aria-label="Chat"><svg viewBox="0 0 16 16"><path d="M1 15V8a7 7 0 1 1 7 7z" fill="#7b75d8"/><path d="M4 5h5v6H4zM10 7l3-2v6l-3-2z" fill="#fff"/></svg></button>
            <button aria-label="Photoshop"><span class="ps">Ps</span></button>
            <button aria-label="Explorer"><svg viewBox="0 0 16 16"><path d="M0 2h6l2 2h8v11H0z" fill="#e9a820"/><path d="M0 5h16v9H0z" fill="#ffd45e"/><path d="M3 11h10v4H3z" fill="#1f7fd0"/></svg></button>
            <button aria-label="AnyDesk"><svg viewBox="0 0 16 16"><path d="M8 0l8 8-8 8-8-8z" fill="#f0271c"/><path d="M8 0l8 8-8 8z" fill="#f3541c"/></svg></button>
            <button aria-label="Chrome"><svg viewBox="0 0 16 16"><circle cx="8" cy="8" r="8" fill="#fbc116"/><path d="M8 8L1.100 4A8 8 0 0 1 14.900 4z" fill="#e33b2e"/><path d="M8 8L1.100 4A8 8 0 0 0 8 16l3.500-6z" fill="#2da94f"/><circle cx="8" cy="8" r="4" fill="#fff"/><circle cx="8" cy="8" r="3" fill="#4285f4"/></svg></button>
            <button aria-label="Audacity"><svg viewBox="0 0 16 16"><circle cx="8" cy="10" r="5" fill="#f5a623"/><path d="M4 9h8M4 12h8" stroke="#d8301a" stroke-width="1.500" fill="none"/><path d="M2 12V8a6 6 0 0 1 12 0v4" fill="none" stroke="#1414dc" stroke-width="2"/><path d="M0 9h4v5H0zM12 9h4v5h-4z" fill="#1414dc"/></svg></button>
            <button aria-label="Epic Games"><span class="epic">EPIC</span></button>
            <button class="running" aria-label="Chrome profile"><svg viewBox="0 0 16 16"><circle cx="8" cy="8" r="8" fill="#fbc116"/><path d="M8 8L1.100 4A8 8 0 0 1 14.900 4z" fill="#e33b2e"/><path d="M8 8L1.100 4A8 8 0 0 0 8 16l3.500-6z" fill="#2da94f"/><circle cx="8" cy="8" r="4" fill="#fff"/><circle cx="8" cy="8" r="3" fill="#4285f4"/><circle cx="13" cy="4" r="4" fill="#6b4a35"/><circle cx="13" cy="4" r="2" fill="#c9a184"/></svg></button>
            <button class="running focused" aria-label="AutoCAD"><span class="acad">A</span></button>
        </div>
        <div class="tray">
            <svg class="ico" viewBox="0 0 12 12"><path d="M2.500 8L6 4.500 9.500 8" fill="none" stroke="#eee" stroke-width="1.300"/></svg>
            <svg class="ico cloud" viewBox="0 0 12 12"><path d="M3 10a2.500 2.500 0 0 1 0-5 3.500 3.500 0 0 1 6.500 1A2 2 0 0 1 9.500 10z" fill="#ddd"/></svg>
            <svg class="ico" viewBox="0 0 12 12"><path d="M1 5a7 7 0 0 1 10 0M2.500 7a5 5 0 0 1 7 0M4.300 8.800a2.500 2.500 0 0 1 3.400 0" fill="none" stroke="#ddd"/><circle cx="6" cy="10" r="1" fill="#ddd"/></svg>
            <svg class="ico" viewBox="0 0 12 12"><path d="M1 4.500h2l3-2.500v8L3 7.500H1z" fill="none" stroke="#eee"/><path d="M8 4v4M10 3v6" stroke="#aaa"/></svg>
            <svg class="ico" viewBox="0 0 12 12"><path d="M1 3.500h9v6H1z" fill="#eee"/><path d="M11 5v3" stroke="#eee" stroke-width="1.500"/><path d="M3 1v5M1 3h4" stroke="#eee"/></svg>
            <div class="clock">10:27 p. m.<br>23/11/2023</div>
            <svg class="ico" viewBox="0 0 12 12"><path d="M6 1c3 0 3.500 2 3.500 5L11 9H1l1.500-3C2.500 3 3 1 6 1zM4.500 10h3L6 11.500z" fill="#7fd0f5"/></svg>
        </div>
    </footer>

</body>
</html>
```
FILE: styles.css
```css
* {
    box-sizing: border-box;
}

body {
    margin: 0;
    min-height: 100vh;
    display: flex;
    flex-direction: column;
    font-family: Lato, Roboto, sans-serif;
    font-size: 8px;
    line-height: 11px;
    color: #f0f0f0;
    background-color: #3b3b3b;
}

a {
    color: inherit;
    text-decoration: none;
}

button, input, select {
    font: inherit;
    color: inherit;
    background: none;
    border: none;
    border-radius: 0;
    padding: 0;
    margin: 0;
}

button {
    display: flex;
    align-items: center;
    justify-content: center;
    white-space: nowrap;
}

svg {
    display: block;
    flex: none;
}

.ico {
    width: 12px;
    height: 12px;
}

.caret {
    flex: none;
    width: 0;
    height: 0;
    border: 2px solid transparent;
    border-top: 3px solid #eee;
    border-bottom: none;
}

.caret.up {
    border-top: none;
    border-bottom: 3px solid #444;
}

/* Cabecera: menu, titulo y pestañas */
.header {
    display: grid;
    grid-template-columns: 26px 1fr;
    grid-template-rows: 15px 13px;
    background-color: #4a4a4a;
}

.app-button {
    grid-row: 1 / 3;
    height: 25px;
    background: linear-gradient(#c6c6c6, #777);
    border: 1px solid #333;
}

.app-letter {
    color: #c8201c;
    font-size: 21px;
    font-weight: 900;
    line-height: 22px;
}

.app-button .caret {
    border-top-color: #333;
}

.titlebar {
    display: flex;
    height: 15px;
    background-color: #fff;
    color: #1a1a1a;
}

.quick-access {
    display: flex;
    align-items: center;
    gap: 4px;
    width: 139px;
    padding-left: 4px;
    background: linear-gradient(#8e8e8e, #6e6e6e);
}

.with-caret {
    gap: 4px;
}

.customize {
    border-top: 1px solid #eee;
    padding-top: 1px;
}

.app-title {
    flex: 1;
    display: flex;
    justify-content: center;
    gap: 8px;
    line-height: 15px;
    white-space: nowrap;
}

.infocenter {
    display: flex;
    align-items: center;
    gap: 6px;
    width: 290px;
    color: #f4f4f4;
    background: linear-gradient(#8e8e8e, #6e6e6e);
}

.info-arrow {
    margin-left: 3px;
    border: 3px solid transparent;
    border-left: 4px solid #fff;
    border-right: none;
}

.keyword {
    width: 118px;
    height: 13px;
    margin-left: -4px;
    padding-left: 2px;
    margin-right: -3px;
    background-color: #595959;
    border: 1px solid #484848;
    font-style: italic;
}

.keyword::placeholder {
    color: #cfcfcf;
}

.sign-in {
    flex: 1;
    gap: 3px;
    justify-content: flex-start;
}

.sign-in .caret {
    margin-left: auto;
}

.help {
    padding: 0 2px 0 6px;
    border-left: 1px solid #666;
    height: 15px;
}

.help-mark {
    width: 10px;
    height: 10px;
    line-height: 10px;
    border-radius: 50%;
    background-color: #fff;
    color: #28418c;
    font-weight: 700;
    text-align: center;
}

.window-buttons {
    display: flex;
    justify-content: space-around;
    width: 107px;
    padding: 0 4px 0 14px;
}

.ribbon-tabs {
    display: flex;
    align-items: center;
    padding: 2px 0 0 4px;
}

.ribbon-tabs a {
    padding: 0 6px;
    line-height: 11px;
    color: #d8d8d8;
}

.ribbon-tabs .active {
    background: linear-gradient(#6e6e6e, #5e5e5e);
    color: #fff;
}

.ribbon-tabs button {
    margin-left: 9px;
}

.pill {
    width: 9px;
    height: 6px;
}

/* Cinta de herramientas */
.ribbon {
    display: flex;
    height: 65px;
    border-bottom: 1px solid #6a6a6a;
    background-color: #484848;
}

.panel {
    display: flex;
    flex-direction: column;
    border-right: 1px solid #444;
    border-left: 1px solid #6a6a6a;
    background-color: #5a5a5a;
}

.panel-draw { width: 145px; }
.panel-modify { width: 164px; }
.panel-annotation { width: 110px; }
.panel-layers { width: 178px; }
.panel-block { width: 52px; }
.panel-properties { width: 145px; }
.panel-groups { width: 43px; }
.panel-utilities { width: 64px; }
.panel-clipboard { width: 51px; }
.panel-view { width: 42px; }

.tools {
    flex: 1;
    display: flex;
    padding-top: 2px;
}

.panel-title {
    position: relative;
    display: flex;
    align-items: center;
    justify-content: center;
    gap: 4px;
    height: 12px;
    background-color: #4b4b4b;
}

.panel-title .caret {
    border-width: 3px 3px 0;
}

.panel-view .panel-title {
    justify-content: flex-start;
    padding-left: 3px;
}

.launcher {
    position: absolute;
    right: 1px;
    font-size: 6px;
}

.big {
    flex-direction: column;
    justify-content: flex-start;
    min-width: 27px;
    height: 50px;
}

.big.wide {
    min-width: 38px;
}

.big.narrow {
    min-width: 22px;
}

.big svg {
    width: 22px;
    height: 22px;
    margin-bottom: 3px;
}

.big .caret {
    margin-top: 2px;
}

.text-icon {
    height: 25px;
    font-size: 24px;
    line-height: 23px;
    color: #dcdcdc;
}

.stack {
    display: flex;
    flex-direction: column;
    padding: 0 2px;
}

.stack.flush {
    padding: 0;
}

.panel-utilities .tools {
    justify-content: space-between;
    padding-left: 3px;
}

.panel-utilities .stack {
    padding-right: 3px;
}

.panel-clipboard .tools {
    justify-content: space-around;
}

.small {
    height: 16px;
    gap: 3px;
    justify-content: flex-start;
    padding: 0 1px;
}

.col {
    width: 47px;
}

.small .caret {
    margin-left: 3px;
}

.small .caret.push {
    margin-left: auto;
}

.small.pressed {
    background-color: #4a80c4;
    outline: 1px solid #8db6e6;
    outline-offset: -1px;
}

/* Listas desplegables */
.combo {
    position: relative;
    display: flex;
    align-items: center;
    gap: 2px;
    height: 14px;
    padding-left: 2px;
    background-color: #4d4d4d;
    border: 1px solid #383838;
}

.combo::after {
    content: "";
    position: absolute;
    right: 2px;
    top: 5px;
    border: 2px solid transparent;
    border-top: 3px solid #eee;
    border-bottom: none;
    pointer-events: none;
}

.combo select {
    flex: 1;
    min-width: 0;
    appearance: none;
    line-height: 12px;
}

.swatch {
    width: 10px;
    height: 9px;
    margin: 0 2px;
    background-color: #000;
}

.layer-tools {
    flex: 1;
    padding: 1px 1px 0 2px;
}

.icon-row {
    display: flex;
    gap: 4px;
    height: 16px;
    padding-top: 2px;
}

.layer-combo {
    gap: 1px;
    margin-bottom: 1px;
}

.named {
    gap: 3px;
}

.property-list {
    flex: 1;
    display: grid;
    grid-template-columns: 14px 1fr;
    grid-template-rows: repeat(3, 16px);
    align-items: center;
    padding-right: 1px;
}

.property-list .swatch {
    margin: 0 4px;
}

.line-sample {
    width: 38px;
    height: 2px;
    margin-left: 3px;
    background-color: #fff;
}

.line-sample.dashed {
    height: 1px;
    background: repeating-linear-gradient(90deg, #bbb 0 12px, transparent 12px 18px, #bbb 18px 20px, transparent 20px 26px);
}

/* Pestañas de archivo */
.file-tabs {
    display: flex;
    align-items: flex-end;
    height: 18px;
    padding-left: 13px;
    border-bottom: 2px solid #616161;
}

.file-tab {
    display: flex;
    align-items: center;
    height: 14px;
    padding: 0 8px;
    background-color: #505050;
    color: #c0c0c0;
    clip-path: polygon(6px 0, calc(100% - 6px) 0, 100% 100%, 0 100%);
}

.start {
    width: 84px;
}

.current.file-tab {
    width: 112px;
    margin-left: -4px;
    padding: 0 10px 0 7px;
    justify-content: space-between;
    background-color: #6f6f6f;
    color: #fff;
}

.close {
    color: #333;
    font-size: 7px;
}

.add-tab {
    width: 16px;
    height: 12px;
    margin-left: 1px;
    border-radius: 5px 5px 3px 3px;
    background-color: #565656;
    font-size: 10px;
}

/* Area de dibujo */
.viewport {
    position: relative;
    flex: 1;
    margin-top: -1px;
    background-color: #fff;
    border-right: 2px solid #14404c;
    box-shadow: inset -4px 0 #b4d0ee;
    color: #222;
}

.drawing {
    width: calc(100% - 4px);
}

.drawing path, .drawing circle, .drawing ellipse {
    fill: none;
}

.grid { stroke: #c3c5cf; }
.grid-faint { stroke: #ececf0; stroke-width: 2px; }
.axis { stroke: #0000ff; stroke-dasharray: 6 2 1 2; }
.axis-light { stroke: #8080ff; stroke-dasharray: 5 3; }
.bubbles { stroke: #222; }
.dim { stroke: #8a8a8a; }
.dim.dark { stroke: #444; }
.dim.blue { stroke: #0000ff; }
.thin { stroke: #8a8a8a; }
.medium { stroke: #222; }
.band { stroke: #c4c4c4; stroke-width: 3px; }
.wall { stroke: #000; stroke-width: 3px; }
.wall-edge { stroke: #111; stroke-width: 2px; stroke-dasharray: 4 1; }
.cyan { stroke: #00e5ee; }
.ucs { stroke: #222; }
.cursor { stroke: #000; }

.bubble-text {
    font-family: "Liberation Sans", sans-serif;
    font-size: 10px;
    text-anchor: middle;
    fill: #14148c;
}

.bubble-text .red { fill: #a01450; }

.dim-text {
    font-size: 3px;
    text-anchor: middle;
    fill: #777;
}

.dim-text .red { fill: #b0705a; }
.dim-text .blue { fill: #2a6ae0; }

.ucs-text {
    font-size: 12px;
    font-weight: 300;
    fill: #333;
}

.view-label {
    position: absolute;
    left: 2px;
    top: 4px;
    font-family: Roboto, sans-serif;
    color: #111;
}

.doc-buttons {
    position: absolute;
    right: 8px;
    top: 6px;
    display: flex;
    gap: 4px;
}

.doc-buttons svg {
    width: 9px;
    height: 9px;
}

.viewcube {
    position: absolute;
    right: 11px;
    top: 23px;
    display: flex;
    flex-direction: column;
    align-items: center;
    gap: 10px;
}

.viewcube > svg {
    width: 76px;
    height: 76px;
}

.cube-face {
    font-size: 7px;
    font-weight: 700;
    text-anchor: middle;
    fill: #85878c;
}

.compass {
    font-size: 11px;
    font-weight: 700;
    text-anchor: middle;
    fill: #e4e4e4;
    stroke: #aaa;
    stroke-width: 1px;
    paint-order: stroke;
}

.wcs {
    gap: 4px;
    width: 30px;
    height: 10px;
    border-radius: 3px;
    background-color: #ebebf5;
    color: #888;
    font-size: 7px;
}

.wcs svg {
    width: 6px;
    height: 4px;
}

.navbar {
    position: absolute;
    right: 5px;
    top: 135px;
    border: 1px solid #c4c4c4;
    border-radius: 3px;
    background-color: rgba(245, 245, 245, 0.8);
}

.navbar svg {
    width: 21px;
    height: 134px;
}

.command-line {
    position: absolute;
    left: 0;
    right: 0;
    bottom: 0;
    display: flex;
    align-items: center;
    width: 542px;
    height: 18px;
    margin: 0 auto;
    padding-right: 4px;
    background-color: #fff;
    border: 1px solid #999;
}

.command-line > .caret:not(.up) {
    border-top-color: #888;
    margin: 0 5px 0 2px;
}

.command-grip {
    display: flex;
    align-items: center;
    gap: 3px;
    width: 35px;
    height: 17px;
    background-color: #7c7c7c;
}

.dots {
    width: 4px;
    height: 12px;
    margin-left: 1px;
    background: repeating-linear-gradient(#ccc 0 1px, transparent 1px 2px);
}

.prompt {
    width: 10px;
    height: 9px;
    margin-left: 3px;
    border: 1px solid #9aa4ae;
    background-color: #dde3e8;
    font-size: 6px;
    line-height: 7px;
    text-align: center;
}

.command-line input {
    flex: 1;
    font-family: "Liberation Mono", monospace;
    font-style: italic;
}

.command-line input::placeholder {
    color: #999;
}

/* Barra inferior */
.bottom-bar {
    display: flex;
    justify-content: space-between;
    height: 31px;
    background-color: #3b3b3b;
}

.layout-tabs {
    display: flex;
    height: 12px;
    padding-left: 6px;
}

.layout-tabs a, .layout-tabs button {
    min-width: 42px;
    line-height: 12px;
    text-align: center;
    background-color: #525252;
    color: #b4b4b4;
    clip-path: polygon(0 0, 100% 0, calc(100% - 5px) 100%, 5px 100%);
}

.layout-tabs .current {
    min-width: 40px;
    background-color: #777;
    color: #fff;
    font-weight: 700;
}

.layout-tabs button {
    min-width: 18px;
    font-size: 10px;
}

.status {
    display: flex;
    align-items: center;
    align-self: flex-end;
    gap: 3px;
    height: 18px;
    padding-right: 2px;
    background-color: #4e4e4e;
    border-top: 1px solid #606060;
    border-left: 1px solid #606060;
}

.model {
    padding-left: 3px;
    color: #fff;
}

.cut {
    height: 17px;
    padding-left: 3px;
    border-left: 1px solid #3f3f3f;
}

.scale {
    gap: 3px;
}

/* Barra de tareas */
.taskbar {
    display: grid;
    grid-template-columns: 1fr auto 1fr;
    align-items: center;
    height: 31px;
    padding-left: 4px;
    background-color: #1c1c1c;
}

.widget {
    display: flex;
    align-items: center;
    gap: 6px;
    padding-left: 11px;
    color: #ccc;
}

.widget svg {
    width: 12px;
    height: 14px;
}

.widget b {
    font-weight: 400;
    color: #fff;
}

.task-icons {
    display: flex;
    align-items: center;
    gap: 4px;
}

.task-icons button {
    position: relative;
    width: 25px;
    height: 25px;
    border-radius: 3px;
}

.task-icons button svg {
    width: 16px;
    height: 16px;
}

.search {
    display: flex;
    align-items: center;
    gap: 6px;
    width: 143px;
    height: 21px;
    padding: 0 7px;
    border: 1px solid #4a4a4a;
    border-radius: 11px;
    background-color: #383838;
    font-size: 9px;
}

.search input {
    width: 100px;
}

.search input::placeholder {
    color: #ccc;
}

.ps {
    width: 15px;
    height: 15px;
    border: 1px solid #8cc4ff;
    background-color: #001e4a;
    color: #8cc4ff;
    font-weight: 700;
    line-height: 13px;
}

.epic {
    width: 13px;
    height: 15px;
    border-radius: 0 0 5px 5px;
    background-color: #050505;
    color: #fff;
    font-size: 5px;
    font-weight: 900;
    line-height: 10px;
}

.acad {
    width: 16px;
    height: 16px;
    background-color: #f4ecec;
    color: #b01c20;
    font-size: 14px;
    font-weight: 900;
    line-height: 16px;
}

.focused {
    background-color: #2e2e2e;
}

.running::after {
    content: "";
    position: absolute;
    bottom: 0;
    width: 4px;
    height: 2px;
    border-radius: 1px;
    background-color: #999;
}

.focused::after {
    width: 10px;
    background-color: #4cc2ff;
}

.tray {
    display: flex;
    align-items: center;
    justify-content: flex-end;
    gap: 4px;
    padding-right: 12px;
}

.cloud {
    margin: 0 4px;
}

.clock {
    margin-left: 4px;
    text-align: right;
    white-space: nowrap;
    color: #fff;
}
```
